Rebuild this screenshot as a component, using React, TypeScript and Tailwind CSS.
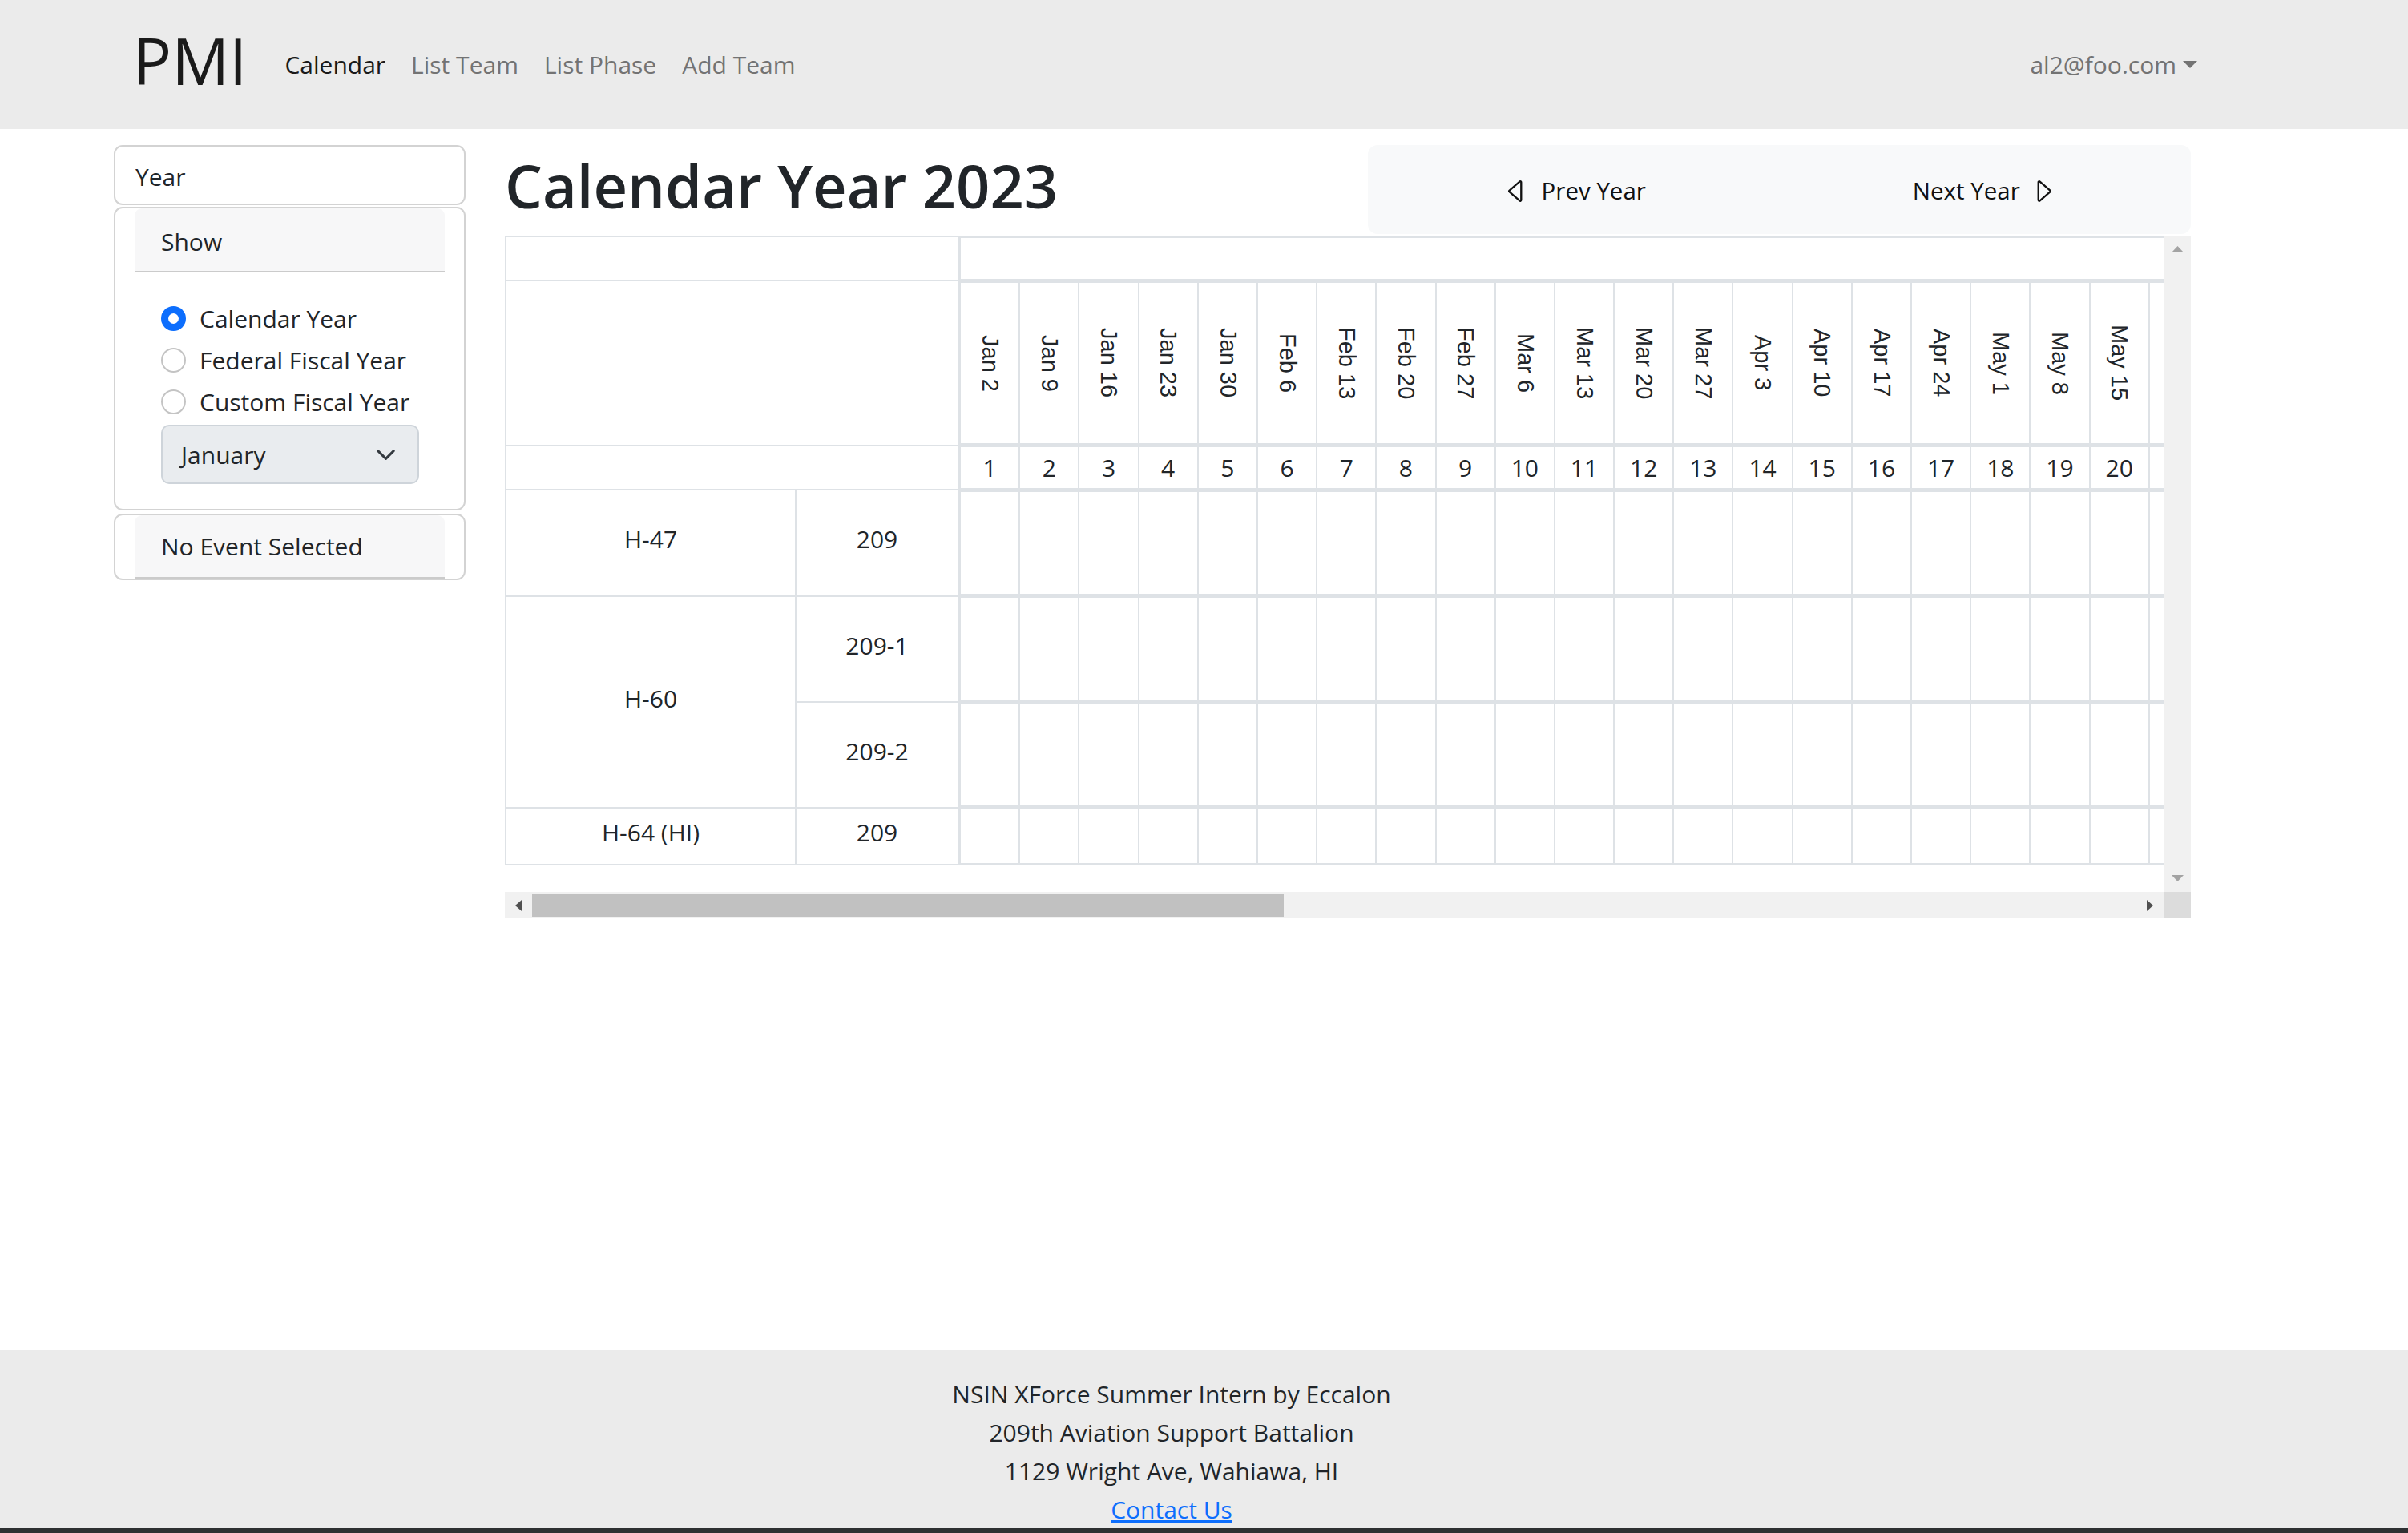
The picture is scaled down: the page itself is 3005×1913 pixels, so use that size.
import React from "react";

const MONTHS = ["Jan", "Feb", "Mar", "Apr", "May", "Jun", "Jul", "Aug", "Sep", "Oct", "Nov", "Dec"];

// every Monday of the year, as "Jan 2"
function mondaysOf(year: number): string[] {
  const out: string[] = [];
  const d = new Date(Date.UTC(year, 0, 1));
  while (d.getUTCDay() !== 1) d.setUTCDate(d.getUTCDate() + 1);
  while (d.getUTCFullYear() === year) {
    out.push(`${MONTHS[d.getUTCMonth()]} ${d.getUTCDate()}`);
    d.setUTCDate(d.getUTCDate() + 7);
  }
  return out;
}

// only the weeks that fit in the scrolled viewport get drawn, plus one partial column
const VISIBLE_WEEKS = 20;
const weeks = mondaysOf(2023).slice(0, VISIBLE_WEEKS);

const bodyRows = [
  { key: "h47-209", cls: "h-[132px] border-b-[5px]" },
  { key: "h60-209-1", cls: "h-[132px] border-b-[5px]" },
  { key: "h60-209-2", cls: "h-[132px] border-b-[5px]" },
  { key: "h64-209", cls: "h-[70px] border-b-[3px]" },
];

function CaretLeft() {
  return (
    <svg width="37" height="37" viewBox="0 0 16 16" fill="currentColor">
      <path d="M10 12.796V3.204L4.519 8 10 12.796zm-.659.753-5.48-4.796a1 1 0 0 1 0-1.506l5.48-4.796A1 1 0 0 1 11 3.204v9.592a1 1 0 0 1-1.659.753z" />
    </svg>
  );
}

function CaretRight() {
  return (
    <svg width="37" height="37" viewBox="0 0 16 16" fill="currentColor">
      <path d="M6 12.796V3.204L11.481 8 6 12.796zm.659.753 5.48-4.796a1 1 0 0 0 0-1.506L6.659 2.451C6.011 1.885 5 2.345 5 3.204v9.592a1 1 0 0 0 1.659.753z" />
    </svg>
  );
}

function Radio({ label, checked }: { label: string; checked?: boolean }) {
  return (
    <div className="h-[52px] flex items-center">
      {checked ? (
        <span className="w-[31px] h-[31px] rounded-full bg-[#0d6efd] flex items-center justify-center">
          <span className="w-[13px] h-[13px] rounded-full bg-white" />
        </span>
      ) : (
        <span className="w-[31px] h-[31px] rounded-full border-2 border-[#c4c4c4] bg-white" />
      )}
      <span className="ml-[17px]">{label}</span>
    </div>
  );
}

function Sidebar() {
  return (
    <aside className="w-[439px] shrink-0 text-[30px] text-[#212529]">
      <div className="h-[75px] border-2 border-[#d3d3d3] rounded-[11px] flex items-center pl-[25px] pt-[4px]">
        Year
      </div>
      <div className="mt-[2px] border-2 border-[#d3d3d3] rounded-[11px] px-[24px] pb-[31px]">
        <div className="h-[80px] bg-[#f7f7f8] border-b-2 border-[#cbcbcb] rounded-t-[9px] flex items-center pl-[33px] pt-[4px]">
          Show
        </div>
        <div className="pt-[31px] pl-[33px]">
          <Radio label="Calendar Year" checked />
          <Radio label="Federal Fiscal Year" />
          <Radio label="Custom Fiscal Year" />
          <div className="mt-[3px] w-[322px] h-[74px] rounded-[10px] border-2 border-[#ced4da] bg-[#e9ecef] flex items-center justify-between pl-[23px] pr-[28px]">
            <span>January</span>
            <svg width="23" height="13" viewBox="0 0 14 8" fill="none" stroke="#343a40" strokeWidth="1.8" strokeLinecap="round" strokeLinejoin="round">
              <path d="M1 1l6 6 6-6" />
            </svg>
          </div>
        </div>
      </div>
      <div className="mt-[4px] border-2 border-[#d3d3d3] rounded-[11px] px-[24px]">
        <div className="h-[79px] bg-[#f7f7f8] border-b-2 border-[#cbcbcb] rounded-t-[9px] flex items-center pl-[33px]">
          No Event Selected
        </div>
      </div>
    </aside>
  );
}

function LabelBlock() {
  const cell = "flex items-center justify-center border-[#dee2e6]";
  const body = `${cell} pb-[10px]`;
  return (
    <div className="shrink-0 border-t-2 border-l-2 border-[#dee2e6] grid grid-cols-[362px_201px] grid-rows-[55px_206px_55px_133px_132px_132px_71px]">
      <div className={`${cell} col-span-2 border-b-2`} />
      <div className={`${cell} col-span-2 border-b-2`} />
      <div className={`${cell} col-span-2 border-b-2`} />
      <div className={`${body} border-b-2 border-r-2`}>H-47</div>
      <div className={`${body} border-b-2`}>209</div>
      <div className={`${body} row-span-2 border-b-2 border-r-2`}>H-60</div>
      <div className={`${body} border-b-2`}>209-1</div>
      <div className={`${body} border-b-2`}>209-2</div>
      <div className={`${body} border-b-2 border-r-2`}>H-64 (HI)</div>
      <div className={`${body} border-b-2`}>209</div>
    </div>
  );
}

function WeekGrid() {
  const col = "w-[74.2px] shrink-0 h-full border-r-2 border-[#dee2e6]";
  return (
    <div className="shrink-0 border-t-[3px] border-l-4 border-[#dee2e6] flex flex-col">
      <div className="h-[56px] border-b-[5px] border-[#dee2e6]" />
      <div className="h-[205px] border-b-[5px] border-[#dee2e6] flex">
        {weeks.map((w) => (
          <div key={w} className={`${col} flex items-center justify-center`}>
            <span className="[writing-mode:vertical-rl] font-['Liberation_Sans',Arial,sans-serif] text-[29px] whitespace-nowrap">
              {w}
            </span>
          </div>
        ))}
        <div className={col} />
      </div>
      <div className="h-[56px] border-b-[5px] border-[#dee2e6] flex">
        {weeks.map((w, i) => (
          <div key={w} className={`${col} flex items-center justify-center`}>
            {i + 1}
          </div>
        ))}
        <div className={col} />
      </div>
      {bodyRows.map((r) => (
        <div key={r.key} className={`${r.cls} border-[#dee2e6] flex`}>
          {weeks.map((w) => (
            <div key={w} className={col} />
          ))}
          <div className={col} />
        </div>
      ))}
    </div>
  );
}

function CalendarTable() {
  return (
    <div className="flex flex-col">
      <div className="flex">
        <div className="w-[2070px] h-[819px] overflow-hidden">
          <div className="flex w-max text-[30px] text-[#212529]">
            <LabelBlock />
            <WeekGrid />
          </div>
        </div>
        {/* vertical scrollbar, nothing to scroll */}
        <div className="w-[34px] h-[819px] bg-[#f1f1f1] flex flex-col justify-between items-center py-[13px]">
          <svg width="15" height="8" viewBox="0 0 15 8">
            <polygon points="7.5,0 15,8 0,8" fill="#a3a3a3" />
          </svg>
          <svg width="15" height="8" viewBox="0 0 15 8">
            <polygon points="0,0 15,0 7.5,8" fill="#a3a3a3" />
          </svg>
        </div>
      </div>
      <div className="flex h-[33px]">
        <div className="w-[2070px] bg-[#f1f1f1] flex items-center">
          <div className="w-[34px] flex justify-center">
            <svg width="8" height="14" viewBox="0 0 8 14">
              <polygon points="8,0 8,14 0,7" fill="#505050" />
            </svg>
          </div>
          <div className="w-[938px] h-[29px] bg-[#c1c1c1]" />
          <div className="flex-1" />
          <div className="w-[34px] flex justify-center">
            <svg width="8" height="14" viewBox="0 0 8 14">
              <polygon points="0,0 8,7 0,14" fill="#505050" />
            </svg>
          </div>
        </div>
        <div className="w-[34px] bg-[#dcdcdc]" />
      </div>
    </div>
  );
}

export default function App() {
  return (
    <div className="h-[1913px] flex flex-col bg-white font-['Open_Sans',sans-serif] text-[#212529]">
      <nav className="h-[161px] shrink-0 bg-[#ebebeb]">
        <div className="ml-[142px] w-[2640px] h-full px-[24px] flex items-center">
          <span className="text-[80px] leading-none text-[#1a1a1a] mr-[31px] pb-[12px]">PMI</span>
          <div className="flex items-center text-[30px]">
            <a className="px-[16px] text-[#1a1a1a]">Calendar</a>
            <a className="px-[16px] text-[#737373]">List Team</a>
            <a className="px-[16px] text-[#737373]">List Phase</a>
            <a className="px-[16px] text-[#737373]">Add Team</a>
          </div>
          <div className="ml-auto px-[16px] flex items-center text-[30px] text-[#737373]">
            al2@foo.com
            <span className="ml-[8px] w-0 h-0 border-t-[9px] border-x-[9px] border-x-transparent border-t-[#737373]" />
          </div>
        </div>
      </nav>

      <main className="flex-1">
        <div className="ml-[142px] w-[2640px] pt-[20px] flex">
          <Sidebar />
          <section className="ml-[49px] w-[2104px]">
            <div className="h-[113px] flex items-start justify-between">
              <h1 className="mt-[14px] text-[74px] leading-none font-semibold text-[#212529]">Calendar Year 2023</h1>
              <div className="w-[1027px] h-[111px] rounded-[12px] bg-[#f8f9fa] flex pt-[3px] text-[29.5px] text-[#111]">
                <div className="flex-1 flex items-center justify-center gap-[13px]">
                  <CaretLeft />
                  <span>Prev Year</span>
                </div>
                <div className="flex-1 flex items-center justify-center gap-[10px]">
                  <span>Next Year</span>
                  <CaretRight />
                </div>
              </div>
            </div>
            <CalendarTable />
          </section>
        </div>
      </main>

      <footer className="h-[222px] shrink-0 bg-[#ebebeb]">
        <div className="ml-[142px] w-[2640px] pt-[31px] text-center text-[30px] leading-[48px] text-[#212529]">
          <div>NSIN XForce Summer Intern by Eccalon</div>
          <div>209th Aviation Support Battalion</div>
          <div>1129 Wright Ave, Wahiawa, HI</div>
          <a className="text-[#0d6efd] underline">Contact Us</a>
        </div>
      </footer>
      <div className="h-[6px] shrink-0 bg-[#2e3032]" />
    </div>
  );
}
